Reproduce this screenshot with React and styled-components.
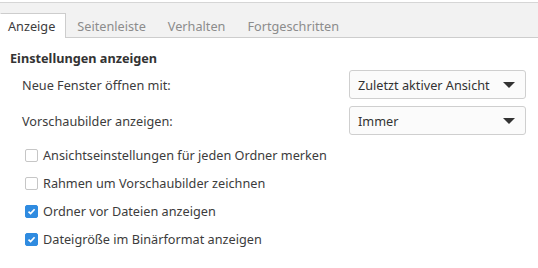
import React from "react";
import styled, { createGlobalStyle } from "styled-components";

const GlobalStyle = createGlobalStyle`
  body {
    margin: 0;
    background: #ffffff;
    font-family: "Noto Sans", "Open Sans", sans-serif;
    font-size: 12.7px;
    color: #3c3c3c;
  }
`;

const Window = styled.div`
  width: 538px;
  height: 268px;
  overflow: hidden;
  border-top: 1px solid #d6d6d6;
  margin-top: 2px;
`;

const TabBar = styled.div`
  display: flex;
  align-items: flex-end;
  height: 34px;
  background: #f2f2f2;
  border-bottom: 1px solid #cdcdcd;
`;

const Tab = styled.div`
  padding: 0 10px;
  height: ${(p) => (p.$active ? "24px" : "23px")};
  line-height: 25px;
  margin-bottom: ${(p) => (p.$active ? "-1px" : "0")};
  color: ${(p) => (p.$active ? "#3c3c3c" : "#8c8c8c")};
  background: ${(p) => (p.$active ? "#ffffff" : "transparent")};
  border: 1px solid ${(p) => (p.$active ? "#cdcdcd" : "transparent")};
  border-bottom: none;
  border-left-color: transparent;

  &:first-child {
    padding-left: 7px;
  }
`;

const Body = styled.div`
  padding: 11px 12px 0 10px;
`;

const SectionTitle = styled.div`
  font-weight: bold;
  color: #333;
  line-height: 18px;
  margin-bottom: 3px;
`;

const FormRow = styled.div`
  display: flex;
  align-items: center;
  justify-content: space-between;
  padding-left: 12px;
  margin-bottom: 7px;
`;

const Combo = styled.div`
  width: 177px;
  height: 29px;
  box-sizing: border-box;
  display: flex;
  align-items: center;
  justify-content: space-between;
  padding: 0 10px 0 8px;
  border: 1px solid #cfcfcf;
  border-radius: 3px;
  background: #fbfbfb;
  color: #333;
`;

const Arrow = styled.span`
  width: 0;
  height: 0;
  border-left: 6px solid transparent;
  border-right: 6px solid transparent;
  border-top: 6px solid #333;
`;

const Checks = styled.div`
  display: flex;
  flex-direction: column;
  gap: 10px;
  padding-left: 15px;
  margin-top: 11px;
`;

const CheckRow = styled.label`
  display: flex;
  align-items: center;
  gap: 5px;
  height: 18px;
`;

const Box = styled.span`
  width: 13px;
  height: 13px;
  box-sizing: border-box;
  border-radius: 2px;
  border: 1px solid ${(p) => (p.$checked ? "#2f8be0" : "#c6c6c6")};
  background: ${(p) => (p.$checked ? "#2f8be0" : "#ffffff")};
  display: flex;
  align-items: center;
  justify-content: center;
`;

function CheckBox({ checked, label }) {
  return (
    <CheckRow>
      <Box $checked={checked}>
        {checked && (
          <svg width="9" height="9" viewBox="0 0 9 9">
            <path d="M1.5 4.6 L3.6 6.6 L7.6 2.2" fill="none" stroke="#fff" strokeWidth="1.7" />
          </svg>
        )}
      </Box>
      {label}
    </CheckRow>
  );
}

export default function App() {
  return (
    <Window>
      <GlobalStyle />
      <TabBar>
        <Tab $active>Anzeige</Tab>
        <Tab>Seitenleiste</Tab>
        <Tab>Verhalten</Tab>
        <Tab>Fortgeschritten</Tab>
      </TabBar>
      <Body>
        <SectionTitle>Einstellungen anzeigen</SectionTitle>
        <FormRow>
          <span>Neue Fenster öffnen mit:</span>
          <Combo>
            Zuletzt aktiver Ansicht
            <Arrow />
          </Combo>
        </FormRow>
        <FormRow>
          <span>Vorschaubilder anzeigen:</span>
          <Combo>
            Immer
            <Arrow />
          </Combo>
        </FormRow>
        <Checks>
          <CheckBox label="Ansichtseinstellungen für jeden Ordner merken" />
          <CheckBox label="Rahmen um Vorschaubilder zeichnen" />
          <CheckBox checked label="Ordner vor Dateien anzeigen" />
          <CheckBox checked label="Dateigröße im Binärformat anzeigen" />
        </Checks>
      </Body>
    </Window>
  );
}
